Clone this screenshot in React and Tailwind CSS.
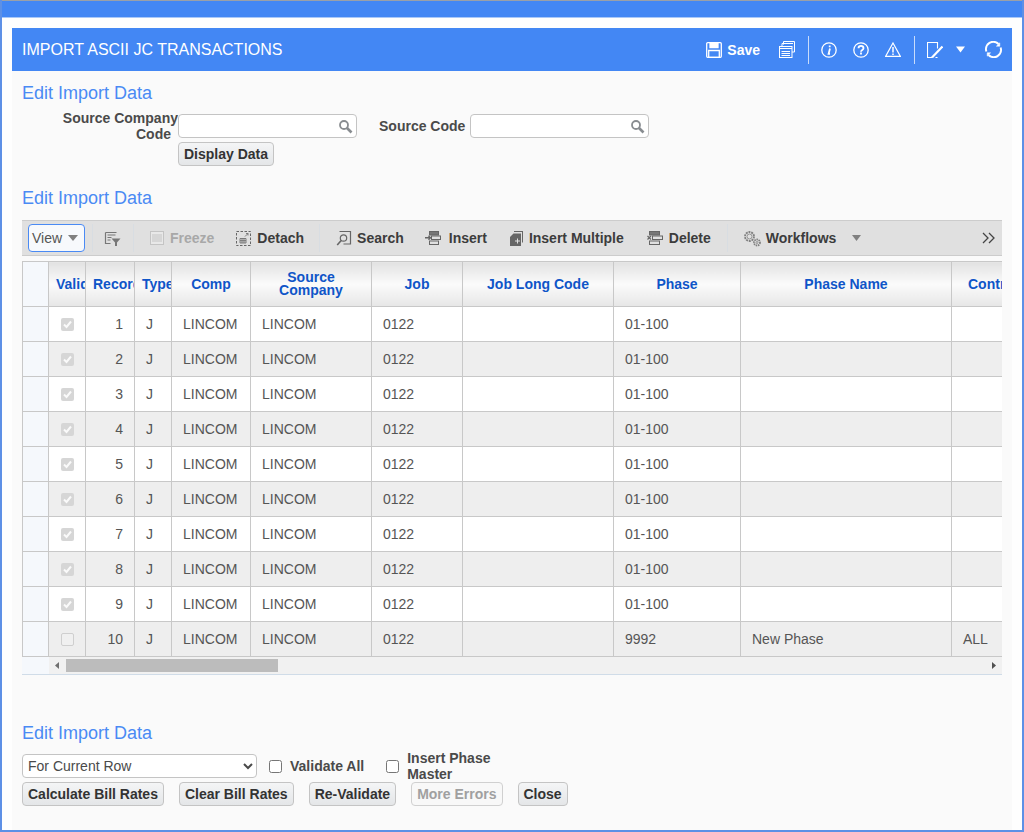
import React from "react";

const cols = [26, 37, 49, 37, 79, 121, 91, 151, 127, 211, 51];
const heads = ["", "Valid", "Record", "Type", "Comp", "Source Company", "Job", "Job Long Code", "Phase", "Phase Name", "Contract"];
const rows = [1, 2, 3, 4, 5, 6, 7, 8, 9, 10];

function Search() {
  return (
    <svg width="15" height="15" viewBox="0 0 15 15" fill="none" stroke="#888c90" className="shrink-0">
      <circle cx="6" cy="6" r="4" strokeWidth="1.8" />
      <path d="M9 9l4.500 4.500" strokeWidth="2.600" />
    </svg>
  );
}

function LookupInput({ className }) {
  return (
    <div className={"h-6 bg-white border border-[#c4c4c4] rounded-[4px] flex items-center justify-end pr-[3px] " + className}>
      <Search />
    </div>
  );
}

function Btn({ children, disabled, className = "" }) {
  return (
    <button
      className={
        "h-6 px-[5px] rounded-[4px] border text-sm font-bold leading-none whitespace-nowrap " +
        (disabled
          ? "border-[#d0d0d0] bg-[#f8f8f8] text-[#a0a0a0] "
          : "border-[#c4c4c4] bg-gradient-to-b from-[#f4f5f6] to-[#e4e6e8] text-[#333333] ") +
        className
      }
    >
      {children}
    </button>
  );
}

function H2({ children, className = "" }) {
  return <h2 className={"text-[18px] leading-5 text-[#4a8af4] " + className}>{children}</h2>;
}

function Tool({ icon, children, disabled, className = "" }) {
  return (
    <div className={"flex items-center text-sm font-bold whitespace-nowrap " + (disabled ? "text-[#a8a8a8] " : "text-[#3c3c3c] ") + className}>
      {icon}
      {children}
    </div>
  );
}

const Sep = () => <div className="w-px h-7 bg-[#d8dde2]" />;

function HeaderIcons() {
  return (
    <div className="flex items-center text-white text-sm font-bold">
      <svg width="16" height="16" viewBox="0 0 16 16" fill="none" stroke="white" strokeWidth="1.300" className="mr-[5px]">
        <path d="M0.700 1.700a1 1 0 0 1 1-1h12.600a1 1 0 0 1 1 1v12.600a1 1 0 0 1-1 1H1.700a1 1 0 0 1-1-1z" />
        <path d="M4 0.700v4.800h8V0.700" fill="white" stroke="white" />
        <path d="M2.700 8.500h10.600v6.800H2.700z" />
      </svg>
      <span className="mr-[19px]">Save</span>
      <svg width="16" height="17" viewBox="0 0 16 17" fill="none" stroke="white" strokeWidth="1" className="mr-[13px]">
        <path d="M4.500 3.500V0.500h11V11H13" />
        <path d="M3 5.500V2.500h11" />
        <rect x="0.500" y="5.500" width="12.500" height="11" />
        <path d="M0.500 7.500h12.500M2.500 10.500h8.500M2.500 12.500h8.500M2.500 14.500h8.500" />
      </svg>
      <div className="w-px h-7 bg-[#c9dcfb] mr-[12px]" />
      <svg width="16" height="16" viewBox="0 0 16 16" fill="none" stroke="white" className="mr-[16px]">
        <circle cx="8" cy="8" r="7.200" strokeWidth="1.300" />
        <path d="M9 6.500L7.600 11.800h1.400M8.700 3.500v1.700" strokeWidth="1.800" />
      </svg>
      <svg width="16" height="16" viewBox="0 0 16 16" fill="none" stroke="white" className="mr-[16px]">
        <circle cx="8" cy="8" r="7.200" strokeWidth="1.300" />
        <path d="M5.500 6.200c0-3.200 5-3.200 5 0 0 1.800-2.500 1.700-2.500 3.500M8 10.500v2" strokeWidth="1.800" />
      </svg>
      <svg width="16" height="15" viewBox="0 0 16 15" fill="none" stroke="white" className="mr-[13px]">
        <path d="M8 1L15.300 14.300H0.700z" strokeWidth="1.200" />
        <path d="M8 5v5.500M8 11.500v1.500" strokeWidth="1.500" />
      </svg>
      <div className="w-px h-7 bg-[#c9dcfb] mr-[12px]" />
      <svg width="16" height="16" viewBox="0 0 16 16" fill="none" stroke="white" className="mr-[13px]">
        <path d="M5 15.500H0.500V0.500h10v6" strokeWidth="1.100" />
        <path d="M10.500 15.500H8.500" strokeWidth="1.100" />
        <path d="M5 15.500L15.500 4.500" strokeWidth="2.200" />
      </svg>
      <svg width="9" height="7" viewBox="0 0 9 7" fill="white" className="mr-[20px]">
        <path d="M0 0.500h9L4.500 6.500z" />
      </svg>
      <svg width="17" height="17" viewBox="0 0 17 17" fill="none" stroke="white" strokeWidth="2">
        <path d="M1.400 10.500A7.300 7.300 0 0 1 13.500 3" />
        <path d="M15.600 6.500A7.300 7.300 0 0 1 3.500 14" />
        <path d="M14.800 1.800v3.400h-3.400z" strokeWidth="0.500" fill="white" />
        <path d="M2.200 15.200v-3.400h3.400z" strokeWidth="0.500" fill="white" />
      </svg>
    </div>
  );
}

const I = {
  filter: (
    <svg width="17" height="17" viewBox="0 0 17 17" fill="none" stroke="#777">
      <path d="M1.500 2.500h11M1.500 2.500v11h5M3.500 5h8M3.500 7.500h4M3.500 10h3" strokeWidth="1.200" />
      <path d="M7.500 8.500h9l-3.500 4v3.500h-2v-3.500z" fill="#777" stroke="none" />
    </svg>
  ),
  freeze: (
    <svg width="14" height="14" viewBox="0 0 14 14" fill="none" stroke="#c4c4c4" className="mr-[6px]">
      <rect x="0.500" y="0.500" width="13" height="13" fill="#e8e8e8" />
      <path d="M3 3v8M5 3v8M7 3v8M9 3v8M11 3v8" />
    </svg>
  ),
  detach: (
    <svg width="15" height="15" viewBox="0 0 15 15" fill="none" stroke="#666" className="mr-[6px]">
      <rect x="0.500" y="0.500" width="14" height="14" strokeDasharray="2.500 1.500" />
      <path d="M4 7.500h6v4.500H4zM6 7.500v4.500M8 7.500v4.500M4 9.700h6" strokeWidth="0.800" />
      <path d="M9 5.500l3-3M10 2.500h2v2" strokeWidth="0.800" />
    </svg>
  ),
  search: (
    <svg width="16" height="16" viewBox="0 0 16 16" fill="none" stroke="#666" className="mr-[5px]">
      <path d="M3.500 1.500h11v12.500h-7" strokeWidth="1.200" />
      <circle cx="7.500" cy="8" r="3.200" strokeWidth="1.200" />
      <path d="M5.200 10.500l-4 4.500" strokeWidth="1.600" />
    </svg>
  ),
  insert: (
    <svg width="16" height="14" viewBox="0 0 16 14" fill="none" stroke="#666" className="mr-[8px]">
      <rect x="4.500" y="0.500" width="9" height="3.500" fill="#777" />
      <rect x="6.500" y="5" width="9" height="3.500" />
      <rect x="4.500" y="10" width="9" height="3.500" />
      <path d="M0 6.700h5M3.500 4.700l2 2-2 2" strokeWidth="1.400" />
    </svg>
  ),
  multi: (
    <svg width="13" height="15" viewBox="0 0 13 15" fill="#666" className="mr-[6px]">
      <path d="M4 0h9v11.500h-1V1H4z" />
      <path d="M3.500 2.500h7.500v12.500H0V6z" />
      <path d="M5 9.500h2v-2h1v2h2v1H8v2H7v-2H5z" fill="#e0e0e0" />
    </svg>
  ),
  del: (
    <svg width="16" height="14" viewBox="0 0 16 14" fill="none" stroke="#666" className="mr-[6px]">
      <rect x="2.500" y="0.500" width="10" height="3.500" fill="#777" />
      <rect x="5.500" y="5" width="10" height="3.500" />
      <rect x="2.500" y="10" width="10" height="3.500" />
      <path d="M0.500 5l3.500 3.500M4 5L0.500 8.500" strokeWidth="1.200" />
    </svg>
  ),
  gears: (
    <svg width="18" height="17" viewBox="0 0 18 17" fill="none" stroke="#808080" className="mr-[5px]">
      <circle cx="6.500" cy="6.500" r="4.500" strokeWidth="1.800" strokeDasharray="2 0.800" />
      <circle cx="6.500" cy="6.500" r="2.500" strokeWidth="0.800" />
      <circle cx="14" cy="12.500" r="3" strokeWidth="1.800" strokeDasharray="1.500 0.700" />
      <circle cx="14" cy="12.500" r="1" strokeWidth="0.800" />
    </svg>
  ),
};

function CheckCell({ checked }) {
  return checked ? (
    <span className="flex mx-auto w-[13px] h-[13px] rounded-[2px] bg-[#d6d6d6] items-center justify-center">
      <svg width="11" height="11" viewBox="0 0 11 11" fill="none" stroke="#fafafa" strokeWidth="2">
        <path d="M2 5.500l2.500 2.500 4.500-5.500" />
      </svg>
    </span>
  ) : (
    <span className="block mx-auto w-[13px] h-[13px] rounded-[2px] border border-[#cfcfcf] bg-[#f0f0f0]" />
  );
}

export default function App() {
  return (
    <div className="w-[1024px] h-[832px] bg-[#fefefe] text-[#444] font-['Liberation_Sans',Arial,sans-serif] border-x-2 border-b-2 border-[#5d90e6] overflow-hidden flex flex-col">
      <div className="h-[18px] shrink-0 bg-[#4387f4] border-t border-[#9aa0a8] border-b border-b-[#a9c8f8] -mx-0.5" />
      <div className="mx-[10px] mt-[10px] h-[43px] shrink-0 bg-[#4387f4] flex items-center justify-between pl-[10px] pr-[10px]">
        <div className="text-white text-base">IMPORT ASCII JC TRANSACTIONS</div>
        <HeaderIcons />
      </div>

      <div className="mx-[10px] px-[10px] bg-[#fafafa] flex-1 flex flex-col">
        <H2 className="mt-3">Edit Import Data</H2>

        <div className="flex items-start mt-[11px] h-[30px]">
          <div className="w-[156px] -mt-[4px] text-right text-sm font-bold leading-4 text-[#4a4a4a] pl-[30px]">
            Source Company <span className="pr-[7px]">Code</span>
          </div>
          <LookupInput className="w-[179px]" />
          <div className="ml-[22px] mt-[4px] text-sm font-bold leading-4 text-[#4a4a4a] whitespace-nowrap w-[91px]">Source Code</div>
          <LookupInput className="w-[179px]" />
        </div>
        <div className="pl-[156px] -mt-[1px] h-6 flex -translate-y-px">
          <Btn>Display Data</Btn>
        </div>

        <H2 className="mt-[21px]">Edit Import Data</H2>

        <div className="mt-3 h-9 w-[980px] bg-[#e0e0e0] border-y border-[#cccccc] flex items-center">
          <div className="ml-[6px] w-[57px] h-7 rounded-[4px] border border-[#4a8af4] bg-[#f7f9fc] flex items-center pl-[3px] gap-[6px] text-sm text-[#555]">
            View
            <svg width="10" height="6" viewBox="0 0 10 6" fill="#808080"><path d="M0 0h10L5 6z" /></svg>
          </div>
          <div className="ml-[7px]"><Sep /></div>
          <div className="ml-[11px] w-[18px]">{I.filter}</div>
          <div className="ml-[11px]"><Sep /></div>
          <Tool disabled className="ml-[16px]" icon={I.freeze}>Freeze</Tool>
          <Tool className="ml-[22px]" icon={I.detach}>Detach</Tool>
          <div className="ml-[15px]"><Sep /></div>
          <Tool className="ml-[16px]" icon={I.search}>Search</Tool>
          <Tool className="ml-[21px]" icon={I.insert}>Insert</Tool>
          <Tool className="ml-[23px]" icon={I.multi}>Insert Multiple</Tool>
          <Tool className="ml-[23px]" icon={I.del}>Delete</Tool>
          <div className="ml-[16px]"><Sep /></div>
          <Tool className="ml-[15px]" icon={I.gears}>Workflows</Tool>
          <svg width="9" height="6" viewBox="0 0 9 6" fill="#808080" className="ml-[16px]"><path d="M0 0h9L4.500 6z" /></svg>
          <div className="ml-auto mr-[7px]">
            <svg width="13" height="12" viewBox="0 0 13 12" fill="none" stroke="#444" strokeWidth="1.300"><path d="M1 1l5 5-5 5M7 1l5 5-5 5" /></svg>
          </div>
        </div>

        <div className="mt-[5px] w-[980px] border-b border-[#d0dce8] overflow-hidden">
          <table className="table-fixed border-collapse w-[980px] text-sm">
            <colgroup>
              {cols.map((w, i) => (
                <col key={i} style={{ width: w }} />
              ))}
            </colgroup>
            <thead>
              <tr className="h-[45px]">
                {heads.map((h, i) =>
                  i === 0 ? (
                    <th key={i} className="bg-[#f5f8fc] border border-[#c8c8c8]" />
                  ) : (
                    <th
                      key={i}
                      className={
                        "bg-gradient-to-b from-[#e2e2e2] via-[#fbfbfb] to-[#e6e6e6] border-y border-x border-[#c8c8c8] text-[#0f55c8] font-bold leading-[13px] overflow-hidden whitespace-nowrap " +
                        (i <= 3 ? "text-left pl-[7px] " : "text-center ") +
                        (i === 10 ? "border-r-0 text-left pl-4" : "")
                      }
                    >
                      {h === "Source Company" ? (
                        <>
                          Source
                          <br />
                          Company
                        </>
                      ) : (
                        h
                      )}
                    </th>
                  )
                )}
              </tr>
            </thead>
            <tbody>
              {rows.map((r) => {
                const last = r === 10;
                const bg = r % 2 === 0 ? "bg-[#eeeeee]" : "bg-white";
                const td = "border border-[#c8c8c8] overflow-hidden whitespace-nowrap " + bg + " ";
                return (
                  <tr key={r} className="h-[35px] text-[#555555]">
                    <td className="bg-[#f5f8fc] border border-[#c8c8c8]" />
                    <td className={td}>
                      <CheckCell checked={!last} />
                    </td>
                    <td className={td + "text-right pr-[11px]"}>{r}</td>
                    <td className={td + "pl-[11px]"}>J</td>
                    <td className={td + "pl-[11px]"}>LINCOM</td>
                    <td className={td + "pl-[11px]"}>LINCOM</td>
                    <td className={td + "pl-[11px]"}>0122</td>
                    <td className={td}></td>
                    <td className={td + "pl-[11px]"}>{last ? "9992" : "01-100"}</td>
                    <td className={td + "pl-[11px]"}>{last ? "New Phase" : ""}</td>
                    <td className={td + "pl-[11px] border-r-0"}>{last ? "ALL" : ""}</td>
                  </tr>
                );
              })}
            </tbody>
          </table>
          <div className="h-[17px] flex items-center">
            <div className="w-[27px] h-full bg-[#f5f8fc]" />
            <div className="flex-1 h-full bg-[#f1f1f1] flex items-center">
              <svg width="17" height="13" viewBox="0 0 17 13" fill="#707070"><path d="M6 6.500l4-3.500v7z" /></svg>
              <div className="w-[212px] h-[13px] bg-[#bcbcbc]" />
              <svg width="17" height="13" viewBox="0 0 17 13" fill="#505050" className="ml-auto"><path d="M11 6.500l-4-3.500v7z" /></svg>
            </div>
          </div>
        </div>

        <H2 className="mt-[48px]">Edit Import Data</H2>

        <div className="mt-[11px] flex items-center h-6">
          <select className="w-[235px] h-6 bg-white border border-[#c4c4c4] rounded-[4px] text-sm text-[#4a4a4a] pl-[1px] font-['Liberation_Sans',Arial,sans-serif]" defaultValue="For Current Row">
            <option>For Current Row</option>
          </select>
          <input type="checkbox" className="ml-[12px] w-[13px] h-[13px]" />
          <span className="ml-2 text-sm font-bold text-[#4a4a4a]">Validate All</span>
          <input type="checkbox" className="ml-[22px] w-[13px] h-[13px]" />
          <span className="ml-2 w-[100px] text-sm font-bold leading-4 text-[#4a4a4a]">Insert Phase Master</span>
        </div>
        <div className="mt-1 flex">
          <Btn>Calculate Bill Rates</Btn>
          <Btn className="ml-[15px]">Clear Bill Rates</Btn>
          <Btn className="ml-[15px]">Re-Validate</Btn>
          <Btn disabled className="ml-[15px]">More Errors</Btn>
          <Btn className="ml-[15px]">Close</Btn>
        </div>
      </div>
    </div>
  );
}
